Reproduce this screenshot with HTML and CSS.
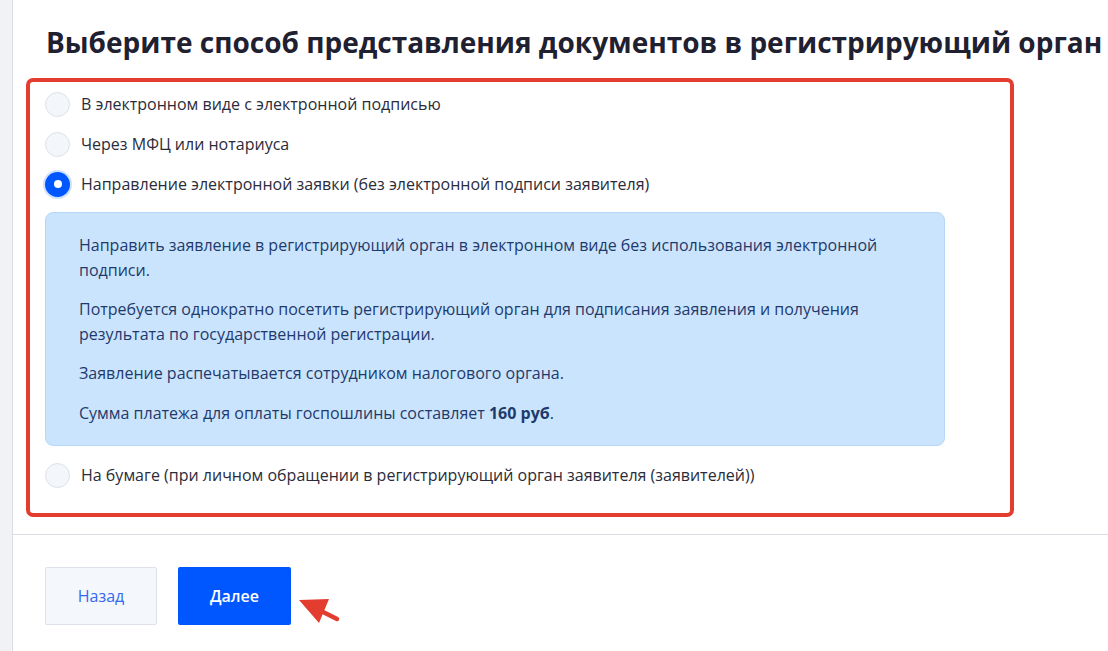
FILE: index.html
```html
<!DOCTYPE html>
<html lang="ru">
<head>
    <meta charset="UTF-8">
    <meta name="viewport" content="width=device-width, initial-scale=1.0">
    <title>Способ представления документов</title>
    <link rel="stylesheet" href="styles.css">
</head>
<body>
    <div class="page">
        <div class="sidebar"></div>
        <div class="main">
            <h1 class="title">Выберите способ представления документов в регистрирующий орган</h1>

            <div class="highlight">
                <label class="option">
                    <span class="radio"></span>
                    <span class="option-text">В электронном виде с электронной подписью</span>
                </label>
                <label class="option">
                    <span class="radio"></span>
                    <span class="option-text">Через МФЦ или нотариуса</span>
                </label>
                <label class="option">
                    <span class="radio checked"></span>
                    <span class="option-text">Направление электронной заявки (без электронной подписи заявителя)</span>
                </label>

                <div class="info">
                    <p>Направить заявление в регистрирующий орган в электронном виде без использования электронной подписи.</p>
                    <p>Потребуется однократно посетить регистрирующий орган для подписания заявления и получения результата по государственной регистрации.</p>
                    <p>Заявление распечатывается сотрудником налогового органа.</p>
                    <p>Сумма платежа для оплаты госпошлины составляет <b>160 руб</b>.</p>
                </div>

                <label class="option last">
                    <span class="radio"></span>
                    <span class="option-text">На бумаге (при личном обращении в регистрирующий орган заявителя (заявителей))</span>
                </label>
            </div>

            <div class="divider"></div>

            <div class="actions">
                <button class="btn btn-back">Назад</button>
                <div class="next-wrap">
                    <button class="btn btn-next">Далее</button>
                    <svg class="pointer" width="44" height="32" viewBox="0 0 44 32">
                        <polygon points="0,2 30,1 20,25" fill="#e23d2f"/>
                        <line x1="18" y1="11" x2="38" y2="21" stroke="#e23d2f" stroke-width="4.5" stroke-linecap="round"/>
                    </svg>
                </div>
            </div>
        </div>
    </div>
</body>
</html>
```

FILE: styles.css
```css
html, body {
    margin: 0;
    padding: 0;
    background: #fff;
}
body {
    font-family: "Open Sans", "Noto Sans", sans-serif;
    color: #2b2c3a;
}
.page {
    display: flex;
    min-height: 651px;
}
.sidebar {
    width: 12px;
    flex: none;
    background: #f1f2f5;
    border-right: 1px solid #dcdde3;
}
.main {
    flex: 1;
    min-width: 0;
}
.title {
    margin: 24px 0 0 33px;
    font-size: 28px;
    line-height: 37px;
    font-weight: 700;
    color: #1f2030;
    white-space: nowrap;
}
.highlight {
    margin: 17px 0 0 13px;
    width: 980px;
    border: 4px solid #e23d2f;
    border-radius: 7px;
    padding: 2px 0 18px 0;
}
.option {
    display: flex;
    align-items: center;
    height: 40px;
    padding-left: 15px;
    cursor: pointer;
}
.option.last {
    margin-top: 9px;
}
.radio {
    box-sizing: border-box;
    width: 25px;
    height: 25px;
    border-radius: 50%;
    background: #f3f6fb;
    border: 1px solid #dde2ea;
    flex: none;
    position: relative;
}
.radio.checked {
    background: #0057ff;
    border: none;
    box-shadow: 0 0 0 2px #cfe0ff;
}
.radio.checked::after {
    content: "";
    position: absolute;
    left: 8.5px;
    top: 8.5px;
    width: 8px;
    height: 8px;
    border-radius: 50%;
    background: #fff;
}
.option-text {
    margin-left: 11px;
    font-size: 16px;
    color: #2b2c3a;
}
.info {
    margin: 8px 0 0 15px;
    width: 900px;
    box-sizing: border-box;
    background: #cbe4fd;
    border: 1px solid #b7d7f8;
    border-radius: 8px;
    padding: 20px 34px 20px 33px;
    color: #1e3a6c;
    font-size: 16px;
    line-height: 24.5px;
}
.info p {
    margin: 0 0 15px 0;
}
.info p:last-child {
    margin-bottom: 0;
}
.info b {
    font-weight: 700;
}
.divider {
    margin-top: 17px;
    height: 1px;
    background: #dcdce3;
}
.actions {
    display: flex;
    align-items: flex-start;
    gap: 21px;
    margin: 32px 0 0 32px;
}
.next-wrap {
    display: flex;
    align-items: flex-start;
}
.btn {
    height: 58px;
    border-radius: 2px;
    font-family: "Open Sans", "Noto Sans", sans-serif;
    font-size: 16px;
    cursor: pointer;
}
.btn-back {
    width: 112px;
    background: #f4f7fb;
    border: 1px solid #dde2ea;
    color: #3568f0;
    font-weight: 500;
}
.btn-next {
    width: 113px;
    background: #0057ff;
    border: none;
    color: #fff;
    font-weight: 600;
}
.pointer {
    margin: 31px 0 0 8px;
}
```
